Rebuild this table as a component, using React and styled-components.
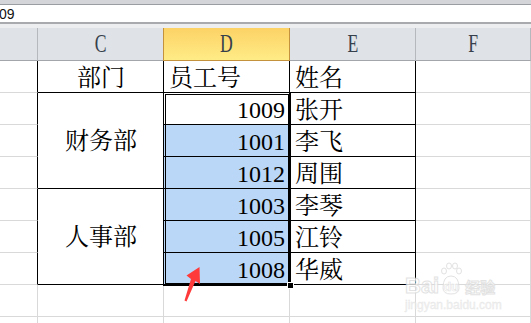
import React from "react";
import styled, { createGlobalStyle } from "styled-components";

const GlobalStyle = createGlobalStyle`
  *, *::before, *::after { box-sizing: border-box; }
  html, body { margin: 0; padding: 0; background: #fff; }
  body { width: 531px; height: 323px; overflow: hidden; }
`;

const Window = styled.div`
  position: relative;
  width: 531px;
  height: 323px;
  overflow: hidden;
  display: flex;
  flex-direction: column;
  background: #fff;
`;

const TopStrip = styled.div`
  flex: none;
  height: 5px;
  background: #d3d5d8;
  border-bottom: 1px solid #9a9da1;
`;

const FormulaBar = styled.div`
  flex: none;
  height: 19px;
  display: flex;
  align-items: center;
  margin-left: -1px;
  border-bottom: 2px solid #a8aaad;
  font-family: "Liberation Sans", Arial, sans-serif;
  font-size: 14px;
  color: #111;
`;

const Gap = styled.div`
  flex: none;
  height: 4px;
  background: #eceef0;
`;

const Sheet = styled.div`
  position: relative;
  display: grid;
  grid-template-columns: 38px 126px 126px 126px 115px;
  grid-template-rows: 33px repeat(9, 32px);
`;

const ColHead = styled.div`
  display: flex;
  align-items: center;
  justify-content: center;
  background: ${(p) => (p.$active ? "linear-gradient(#fcd266, #ffec86)" : "#dfe2e6")};
  border-right: 1px solid ${(p) => (p.$active ? "#c4923c" : "#b5b9be")};
  border-bottom: 1px solid ${(p) => (p.$active ? "#c4923c" : "#a3a7ac")};
  box-shadow: ${(p) => (p.$active ? "-1px 0 0 #c4923c" : "none")};
  font-family: "Liberation Serif", "Times New Roman", serif;
  font-size: 26px;
  color: #36404c;
`;

const Letter = styled.span`
  display: inline-block;
  line-height: 1;
  transform: scaleX(0.68);
`;

const justify = { left: "flex-start", center: "center", right: "flex-end" };

const Cell = styled.div`
  display: flex;
  align-items: ${(p) => (p.$middle ? "center" : "flex-end")};
  justify-content: ${(p) => justify[p.$align || "left"]};
  grid-row: ${(p) => (p.$rows ? `span ${p.$rows}` : "auto")};
  padding: 0 4px ${(p) => (p.$middle ? "0" : "2px")} 5px;
  border-right: 1px solid ${(p) => (p.$edgeR ? "#000" : "#d9d9d9")};
  border-bottom: 1px solid ${(p) => (p.$edgeB ? "#000" : "#d9d9d9")};
  background: ${(p) => (p.$selected ? "#bad7f7" : "#fff")};
  font-family: "Liberation Serif", "Noto Serif CJK SC", "Noto Sans CJK SC", serif;
  font-size: 24px;
  line-height: 24px;
  color: #000;
  white-space: nowrap;
  overflow: hidden;
`;

const Selection = styled.div`
  position: absolute;
  grid-column: 3 / 4;
  grid-row: 3 / 9;
  top: -1px;
  left: -1px;
  right: -1px;
  bottom: -1px;
  border: 3px double #000;
  pointer-events: none;
`;

const FillHandle = styled.div`
  position: absolute;
  right: -6px;
  bottom: -6px;
  width: 7px;
  height: 7px;
  background: #000;
  border: 1px solid #fff;
`;

const Arrow = styled.svg`
  position: absolute;
  left: 180px;
  top: 262px;
  width: 24px;
  height: 44px;
`;

const Watermark = styled.div`
  position: absolute;
  left: 405px;
  top: 262px;
  display: flex;
  flex-direction: column;
  align-items: flex-start;
  color: #fff;
  opacity: 0.8;
  pointer-events: none;
`;

const MarkLine = styled.div`
  display: flex;
  align-items: flex-end;
  gap: 1px;
  font-family: "Liberation Sans", Arial, sans-serif;
  font-weight: bold;
  font-size: 22px;
  line-height: 20px;
  -webkit-text-stroke: 1px #dcdcdc;
`;

const MarkCn = styled.span`
  font-family: "Noto Sans CJK SC", sans-serif;
  font-size: 15px;
  line-height: 18px;
  margin-left: 2px;
`;

const MarkUrl = styled.div`
  font-family: "Liberation Sans", Arial, sans-serif;
  font-size: 12px;
  line-height: 14px;
  margin-top: 2px;
  color: #ececec;
  -webkit-text-stroke: 0.3px #e2e2e2;
`;

const Paw = styled.svg`
  width: 22px;
  height: 34px;
`;

const columns = ["C", "D", "E", "F"];

const groups = [
  {
    dept: "财务部",
    people: [
      ["1009", "张开"],
      ["1001", "李飞"],
      ["1012", "周围"],
    ],
  },
  {
    dept: "人事部",
    people: [
      ["1003", "李琴"],
      ["1005", "江铃"],
      ["1008", "华威"],
    ],
  },
];

const App = () => {
  const cells = [];
  cells.push(<Cell key="h-b" $edgeR />);
  cells.push(
    <Cell key="h-c" $align="center" $edgeR $edgeB>
      部门
    </Cell>
  );
  cells.push(
    <Cell key="h-d" $edgeR $edgeB>
      员工号
    </Cell>
  );
  cells.push(
    <Cell key="h-e" $edgeR $edgeB>
      姓名
    </Cell>
  );
  cells.push(<Cell key="h-f" />);

  let first = true;
  groups.forEach((g, gi) => {
    g.people.forEach(([id, name], i) => {
      cells.push(<Cell key={`b${gi}${i}`} $edgeR />);
      if (i === 0) {
        cells.push(
          <Cell key={`c${gi}`} $rows={3} $middle $align="center" $edgeR $edgeB>
            {g.dept}
          </Cell>
        );
      }
      cells.push(
        <Cell key={`d${gi}${i}`} $align="right" $edgeR $edgeB $selected={!first}>
          {id}
        </Cell>
      );
      first = false;
      cells.push(
        <Cell key={`e${gi}${i}`} $edgeR $edgeB>
          {name}
        </Cell>
      );
      cells.push(<Cell key={`f${gi}${i}`} />);
    });
  });

  for (let r = 0; r < 2; r++) {
    ["b", "c", "d", "e", "f"].forEach((c) => cells.push(<Cell key={`x${r}${c}`} />));
  }

  return (
    <Window>
      <GlobalStyle />
      <TopStrip />
      <FormulaBar>09</FormulaBar>
      <Gap />
      <Sheet>
        <ColHead />
        {columns.map((c) => (
          <ColHead key={c} $active={c === "D"}>
            <Letter>{c}</Letter>
          </ColHead>
        ))}
        {cells}
        <Selection>
          <FillHandle />
        </Selection>
      </Sheet>
      <Arrow viewBox="180 262 24 44">
        <polygon
          points="199.5,267 200,284 195.5,281 186.5,301.5 184.5,300.5 191,279 186.5,275.5"
          fill="#ff3a3a"
        />
      </Arrow>
      <Watermark>
        <MarkLine>
          <span>Bai</span>
          <Paw viewBox="0 0 22 34">
            <g fill="#fff" stroke="#dcdcdc" strokeWidth="1">
              <ellipse cx="4" cy="9" rx="2.5" ry="3" />
              <ellipse cx="9" cy="4" rx="2.5" ry="3" />
              <ellipse cx="15" cy="4" rx="2.5" ry="3" />
              <ellipse cx="19" cy="9" rx="2.5" ry="3" />
              <path d="M3 26 Q3 14 11 14 Q19 14 19 26 Q19 32 11 32 Q3 32 3 26 Z" />
            </g>
            <text x="11" y="29" textAnchor="middle" fontSize="12" fontWeight="bold" fill="#fff" stroke="#dcdcdc" strokeWidth="0.6" fontFamily="Liberation Sans, Arial, sans-serif">du</text>
          </Paw>
          <MarkCn>经验</MarkCn>
        </MarkLine>
        <MarkUrl>jingyan.baidu.com</MarkUrl>
      </Watermark>
    </Window>
  );
};

export default App;
